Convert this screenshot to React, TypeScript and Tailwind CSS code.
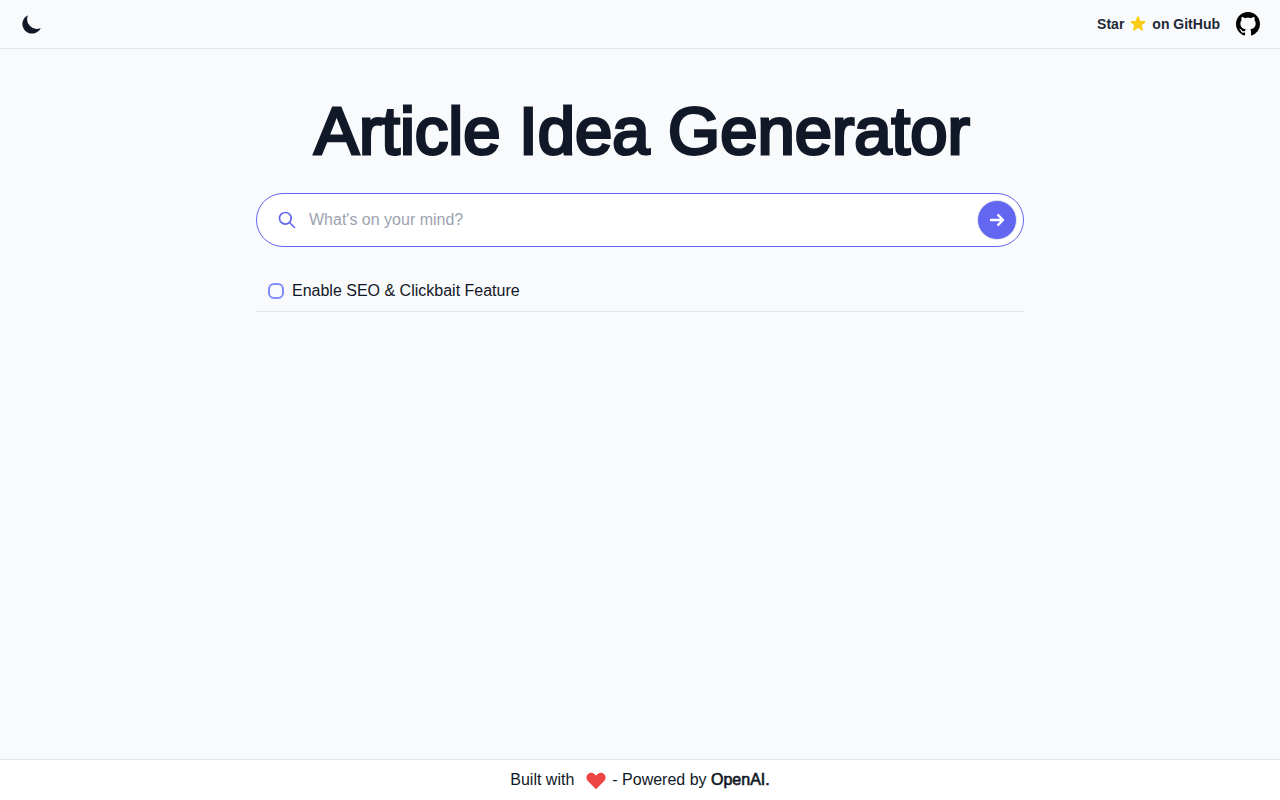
import { useState } from 'react';
import { BsGithub } from 'react-icons/bs';
import {
  HiArrowSmRight,
  HiHeart,
  HiMoon,
  HiOutlineSearch,
  HiStar,
} from 'react-icons/hi';

function Header() {
  return (
    <header className="flex h-[49px] items-center justify-between border-b border-[#e5e7eb] px-5">
      <button type="button" aria-label="Toggle dark mode">
        <HiMoon className="size-6" />
      </button>
      <a
        href="#github"
        className="flex items-center gap-4 text-sm font-bold text-[#1f2937]"
      >
        <span className="flex items-center">
          Star
          <HiStar className="mx-1 size-5 text-[#facc15]" />
          on GitHub
        </span>
        <BsGithub className="size-6 text-black" />
      </a>
    </header>
  );
}

function SearchForm() {
  const [topic, setTopic] = useState('');
  const [seo, setSeo] = useState(false);

  return (
    <form className="w-full" onSubmit={(e) => e.preventDefault()}>
      <div className="flex h-[54px] items-center rounded-full border border-[#6366f1] bg-white pr-1.5 pl-5">
        <HiOutlineSearch className="size-5 text-[#6366f1]" />
        <input
          type="text"
          aria-label="Topic"
          placeholder="What's on your mind?"
          className="ml-3 min-w-0 flex-1 bg-transparent text-base outline-none placeholder:text-[#9ca3af]"
          value={topic}
          onChange={(e) => setTopic(e.target.value)}
        />
        <button
          type="submit"
          aria-label="Generate"
          className="flex size-10 items-center justify-center rounded-full border border-[#e5e7eb] bg-[#6366f1] text-white"
        >
          <HiArrowSmRight className="size-6" />
        </button>
      </div>
      <div className="mt-6 flex h-[41px] items-center border-b border-[#e5e7eb] px-3">
        <input
          id="seo"
          type="checkbox"
          className="size-4 appearance-none rounded-md border-2 border-[#818cf8] checked:bg-[#818cf8]"
          checked={seo}
          onChange={(e) => setSeo(e.target.checked)}
        />
        <label htmlFor="seo" className="pl-2">
          Enable SEO &amp; Clickbait Feature
        </label>
      </div>
    </form>
  );
}

function Footer() {
  return (
    <footer className="flex h-[41px] items-center justify-center border-t border-[#e5e7eb] bg-white">
      <span>Built with</span>
      <HiHeart className="mr-1 ml-2.5 size-6 text-[#ef4444]" />
      <span>
        - Powered by{' '}
        <a href="#openai" className="[-webkit-text-stroke:0.04em]">
          OpenAI.
        </a>
      </span>
    </footer>
  );
}

export default function App() {
  return (
    <div className="flex min-h-screen flex-col bg-[#f9fafc] font-['Liberation_Sans',sans-serif] text-[#111827]">
      <Header />
      <main className="mx-auto flex w-full max-w-3xl flex-1 flex-col items-center pt-12">
        <h1 className="mb-7 pl-1 text-center text-[67px] leading-[68px] [-webkit-text-stroke:3px]">
          Article Idea Generator
        </h1>
        <SearchForm />
      </main>
      <Footer />
    </div>
  );
}
